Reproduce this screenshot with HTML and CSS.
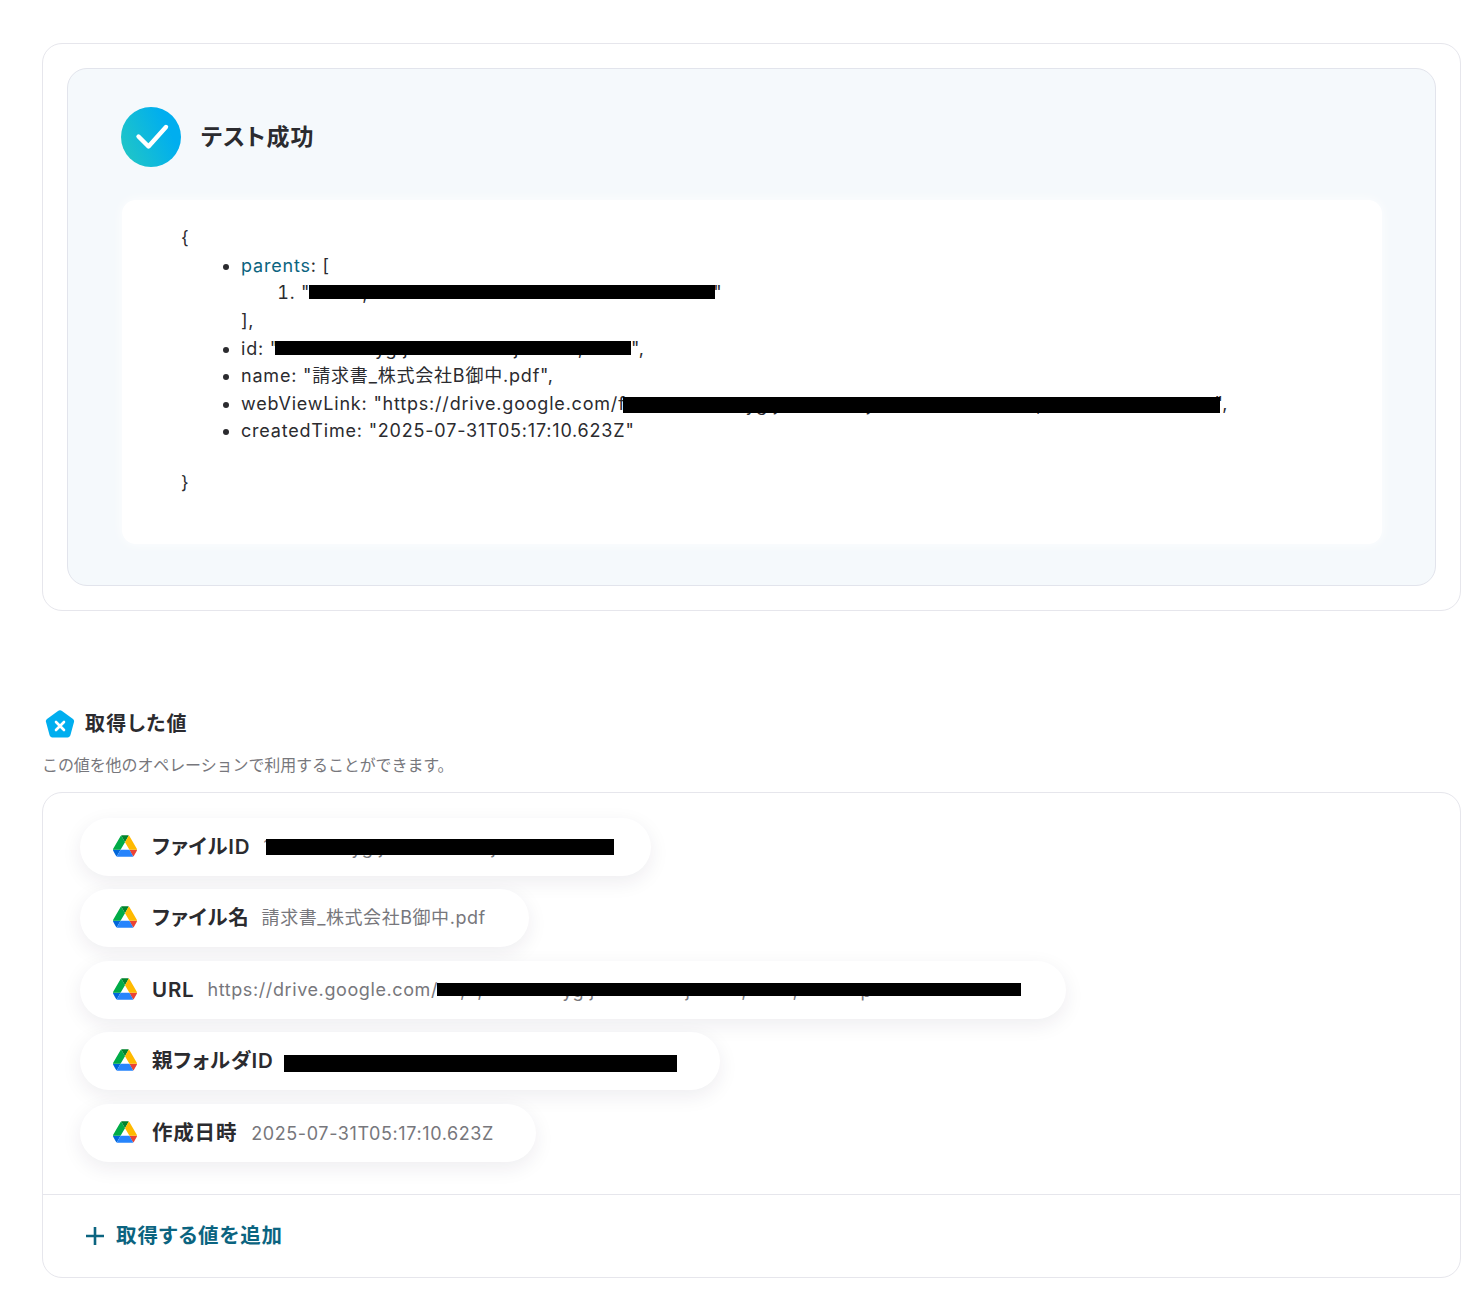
FILE: index.html
```html
<!DOCTYPE html>
<html lang="ja">
<head>
<meta charset="utf-8">
<title>テスト成功</title>
<link rel="stylesheet" href="styles.css">
</head>
<body>
<svg class="defs" width="0" height="0" aria-hidden="true">
  <symbol id="drive" viewBox="0 0 87.3 78">
    <path d="m6.6 66.85 3.85 6.65c.8 1.4 1.95 2.5 3.3 3.3l13.75-23.8h-27.5c0 1.55.4 3.1 1.2 4.5z" fill="#0066da"/>
    <path d="m43.65 25-13.75-23.8c-1.35.8-2.5 1.9-3.3 3.3l-25.4 44a9.06 9.06 0 0 0 -1.2 4.5h27.5z" fill="#00ac47"/>
    <path d="m73.55 76.8c1.35-.8 2.5-1.9 3.3-3.3l1.6-2.75 7.65-13.25c.8-1.4 1.2-2.95 1.2-4.5h-27.502l5.852 11.5z" fill="#ea4335"/>
    <path d="m43.65 25 13.75-23.8c-1.35-.8-2.9-1.2-4.5-1.2h-18.5c-1.6 0-3.15.45-4.5 1.2z" fill="#00832d"/>
    <path d="m59.8 53h-32.3l-13.75 23.8c1.35.8 2.9 1.2 4.5 1.2h50.8c1.6 0 3.15-.45 4.5-1.2z" fill="#2684fc"/>
    <path d="m73.4 26.5-12.7-22c-.8-1.4-1.95-2.5-3.3-3.3l-13.75 23.8 16.15 28h27.45c0-1.55-.4-3.1-1.2-4.5z" fill="#ffba00"/>
  </symbol>
</svg>
<main class="page">
  <section class="card result-card">
    <div class="result-inner">
      <header class="result-head">
        <svg class="check-icon" viewBox="0 0 60 60" aria-hidden="true">
          <defs>
            <linearGradient id="checkGrad" x1="0" y1="0.85" x2="1" y2="0.4">
              <stop offset="0" stop-color="#22c7c4"/>
              <stop offset="0.85" stop-color="#00aeef"/>
            </linearGradient>
          </defs>
          <circle cx="30" cy="30" r="30" fill="url(#checkGrad)"/>
          <path d="M17.5 29.5 27.5 39.5 45 20" fill="none" stroke="#fff" stroke-width="4.4" stroke-linecap="round" stroke-linejoin="round"/>
        </svg>
        <h1 class="result-title">テスト成功</h1>
      </header>
      <div class="code-panel">
        <div class="code-line">{</div>
        <ul class="code-list">
          <li><span class="key">parents</span>: [
            <ol class="code-ol">
              <li>"<span class="redact r-parent"><span class="peek code-peek p-parent" aria-hidden="true">,</span></span>"</li>
            </ol>
            ],
          </li>
          <li>id: "<span class="redact r-id"><span class="peek code-peek p-id" aria-hidden="true">yg j                  j          ,</span></span>",</li>
          <li>name: "請求書_株式会社B御中.pdf",</li>
          <li>webViewLink: "https://drive.google.com/f<span class="redact r-link"><span class="peek link-peek" aria-hidden="true">yg j               j                            ,</span></span>",</li>
          <li>createdTime: "2025-07-31T05:17:10.623Z"</li>
        </ul>
        <div class="code-line code-end">}</div>
      </div>
    </div>
  </section>

  <section class="values">
    <div class="values-head">
      <svg class="pent-icon" viewBox="0 0 30 28" aria-hidden="true">
        <path d="M13 1 2 8.9C1 9.7.6 10.8 1 12l3.6 13.2c.4 1.2 1.4 2.3 2.8 2.3h15.2c1.4 0 2.4-1.1 2.8-2.3L29 12c.4-1.2 0-2.3-1-3.1L17 1c-1.2-.9-2.8-.9-4 0z" fill="#00aeef"/>
        <path d="M11 12 19 20M19 12 11 20" fill="none" stroke="#fff" stroke-width="2.6" stroke-linecap="round"/>
      </svg>
      <h2 class="values-title">取得した値</h2>
    </div>
    <p class="values-sub">この値を他のオペレーションで利用することができます。</p>
    <div class="card values-card">
      <div class="pills">
        <div class="pill">
          <svg class="drive-icon" aria-hidden="true"><use href="#drive"/></svg>
          <span class="pill-label">ファイルID</span>
          <span class="pill-value">1<span class="redact r-pill-id"><span class="peek pid-peek" aria-hidden="true">yg j                   j</span></span></span>
        </div>
        <div class="pill">
          <svg class="drive-icon" aria-hidden="true"><use href="#drive"/></svg>
          <span class="pill-label">ファイル名</span>
          <span class="pill-value v-name">請求書_株式会社B御中.pdf</span>
        </div>
        <div class="pill">
          <svg class="drive-icon" aria-hidden="true"><use href="#drive"/></svg>
          <span class="pill-label l-latin">URL</span>
          <span class="pill-value">https://drive.google.com/<span class="redact r-pill-url"><span class="peek purl-peek" aria-hidden="true">,  ,              yg j                j         ,        ,           p</span></span></span>
        </div>
        <div class="pill">
          <svg class="drive-icon" aria-hidden="true"><use href="#drive"/></svg>
          <span class="pill-label">親フォルダID</span>
          <span class="pill-value"><span class="redact r-pill-parent"></span></span>
        </div>
        <div class="pill">
          <svg class="drive-icon" aria-hidden="true"><use href="#drive"/></svg>
          <span class="pill-label">作成日時</span>
          <span class="pill-value v-date">2025-07-31T05:17:10.623Z</span>
        </div>
      </div>
      <div class="values-foot">
        <svg class="plus-icon" viewBox="0 0 20 20" aria-hidden="true">
          <path d="M10 1v18M1 10h18" fill="none" stroke="#0b6480" stroke-width="2.6"/>
        </svg>
        <span class="add-label">取得する値を追加</span>
      </div>
    </div>
  </section>
</main>
</body>
</html>
```

FILE: styles.css
```css
* { box-sizing: border-box; }
html, body { margin: 0; padding: 0; background: #fff; }
body {
  font-family: Inter, "Noto Sans CJK JP", sans-serif;
  font-feature-settings: "palt";
  color: #2b2b2f;
  height: 1298px;
  overflow: hidden;
}
.defs { position: absolute; }
.page { padding: 43px 9px 20px 42px; }
.card {
  border: 1px solid #e6e6ec;
  border-radius: 20px;
  background: #fff;
}
.result-card { padding: 24px; height: 568px; }
.result-inner {
  height: 518px;
  border: 1px solid #e2e4ec;
  border-radius: 20px;
  background: #f5f9fc;
  padding: 38px 53px 0 53px;
}
.result-head { display: flex; align-items: center; gap: 20px; height: 60px; }
.check-icon { width: 60px; height: 60px; flex: none; }
.result-title {
  margin: 0;
  font-size: 23px;
  letter-spacing: 1.1px;
  font-weight: 600;
  line-height: 1;
  color: #2b2b2f;
}
.code-panel {
  isolation: isolate;
  margin: 33px 0 0 1px;
  height: 344px;
  background: #fff;
  border-radius: 14px;
  box-shadow: 0 0 12px rgba(255,255,255,.9);
  padding: 24.2px 59px 0;
  font-size: 18px;
  line-height: 27.6px;
  letter-spacing: 0.8px;
  color: #2b2b2f;
}
.code-list { margin: 0; padding: 0 0 0 60px; }
.code-ol { margin: 0; padding: 0 0 0 60px; }
.code-end { margin-top: 24px; }
.key { color: #0b6480; }
.redact {
  position: relative;
  display: inline-block;
  background: #000;
  height: 14px;
  vertical-align: 0;
  letter-spacing: 0;
}
.peek {
  position: absolute;
  z-index: -1;
  white-space: pre;
  font-size: 18px;
  line-height: 18px;
  letter-spacing: 0.8px;
}
.code-peek { bottom: -3.5px; }
.p-parent { left: 53px; }
.p-id { left: 100px; }
.link-peek { bottom: -1px; left: 123px; }
.pid-peek { bottom: -1.5px; left: 85px; letter-spacing: 0.6px; }
.purl-peek { bottom: -3.5px; left: 23px; letter-spacing: 0.6px; }
.r-parent { width: 406px; margin: 0 -2px 0 -1px; }
.r-id { width: 356px; margin-left: -4px; }
.r-link { width: 597px; height: 16px; vertical-align: -3px; margin: 0 -5px 0 -3px; }
.r-pill-id { width: 348px; height: 16px; vertical-align: -2px; margin: 0 -6px 0 -5px; }
.r-pill-url { width: 584px; height: 13px; margin: 0 2px 0 -1px; }
.r-pill-parent { width: 393px; height: 17px; vertical-align: -4px; margin-left: -3px; }

.values { margin-top: 99px; }
.values-head { display: flex; align-items: center; gap: 10px; padding-left: 3px; height: 28px; }
.pent-icon { width: 30px; height: 28px; flex: none; }
.values-title {
  margin: 0;
  font-size: 20px;
  letter-spacing: 1.2px;
  font-weight: 600;
  line-height: 1;
}
.values-sub {
  margin: 15px 0 15px;
  font-size: 16px;
  font-feature-settings: normal;
  letter-spacing: -0.1px;
  line-height: 24px;
  color: #77777c;
}
.values-card { height: 486px; }
.pills {
  height: 402px;
  padding: 24.8px 0 0 37px;
  display: flex;
  flex-direction: column;
  align-items: flex-start;
  gap: 13.5px;
  border-bottom: 1px solid #e6e6ec;
}
.pill {
  isolation: isolate;
  display: flex;
  align-items: center;
  height: 58px;
  padding: 0 43px 2px 33px;
  border-radius: 29px;
  background: #fff;
  box-shadow: 0 6px 20px rgba(40,30,70,.08);
}
.drive-icon { width: 24px; height: 22px; flex: none; margin-right: 15px; }
.pill-label {
  font-size: 20.5px;
  font-weight: 600;
  letter-spacing: 0.8px;
  white-space: nowrap;
  margin: 0 13px 2px 0;
}
.l-latin { margin: 2px 13px 0 0; }
.pill-value {
  margin-top: 2px;
  font-size: 18px;
  letter-spacing: 0.6px;
  color: #77777c;
  white-space: nowrap;
}
.v-name { margin: 0 0 2px -1px; letter-spacing: 0.55px; }
.v-date { margin: 4px -1px 0 1px; }
.values-foot { display: flex; align-items: center; gap: 11px; height: 83px; padding: 0 0 2px 42px; }
.plus-icon { width: 20px; height: 20px; flex: none; }
.add-label {
  font-size: 20.5px;
  font-weight: 600;
  letter-spacing: 0.95px;
  padding-bottom: 4px;
  color: #0b6480;
}
```
